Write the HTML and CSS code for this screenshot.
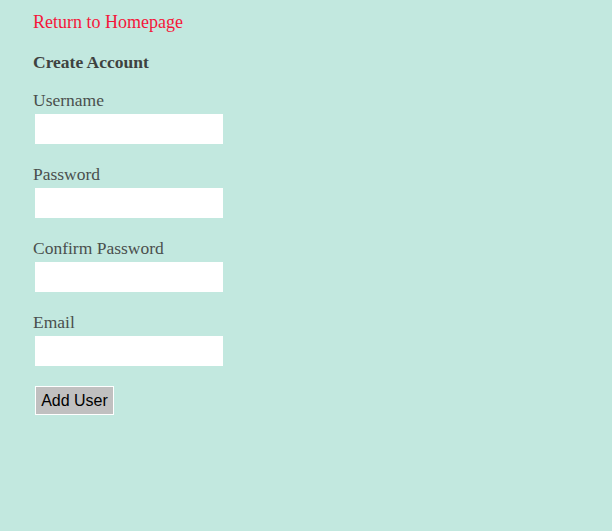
FILE: index.html
```html
<!DOCTYPE html>
<html>
<head>
<meta charset="utf-8">
<link rel="stylesheet" href="styles.css">
</head>
<body>
<div class="page">
  <a class="home" href="#">Return to Homepage</a>
  <h1 class="title">Create Account</h1>
  <form class="form">
    <div class="field">
      <label class="label">Username</label>
      <input class="input" type="text">
    </div>
    <div class="field">
      <label class="label">Password</label>
      <input class="input" type="password">
    </div>
    <div class="field">
      <label class="label">Confirm Password</label>
      <input class="input" type="password">
    </div>
    <div class="field">
      <label class="label">Email</label>
      <input class="input" type="text">
    </div>
    <div class="actions">
      <button class="btn" type="button">Add User</button>
    </div>
  </form>
</div>
</body>
</html>
```
FILE: styles.css
```css
html, body {
  margin: 0;
  padding: 0;
  background: #c2e8df;
  height: 100%;
}
.page {
  display: flex;
  flex-direction: column;
  align-items: flex-start;
  padding: 12px 0 0 33px;
  font-family: "Liberation Serif", serif;
  color: #4a4f4d;
}
.home {
  color: #f5163a;
  text-decoration: none;
  font-size: 18px;
  line-height: 20px;
}
.title {
  margin: 20px 0 0;
  font-size: 17.5px;
  line-height: 20px;
  font-weight: bold;
  color: #3e4240;
}
.form {
  display: flex;
  flex-direction: column;
  gap: 20px;
  margin-top: 18px;
}
.field {
  display: flex;
  flex-direction: column;
  align-items: flex-start;
  gap: 4px;
}
.label {
  font-size: 17.5px;
  line-height: 20px;
}
.input {
  margin: 0 0 0 2px;
  width: 188px;
  height: 30px;
  box-sizing: border-box;
  border: none;
  background: #fff;
  padding: 0 4px;
}
.actions {
  display: flex;
}
.btn {
  margin-left: 2px;
  width: 79px;
  height: 29px;
  box-sizing: border-box;
  background: #c0c0c0;
  border: 1px solid #fff;
  font-family: "Liberation Sans", Arial, sans-serif;
  font-size: 16px;
  color: #000;
  padding: 0;
}
```
